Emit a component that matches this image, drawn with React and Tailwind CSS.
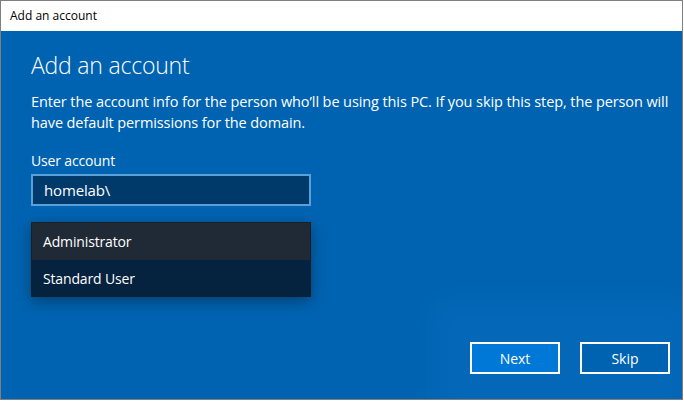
export default function App() {
  return (
    <div
      className="w-[684px] h-[402px] bg-white"
      style={{ fontFamily: '"Open Sans", "Noto Sans", sans-serif' }}
    >
      <div className="w-[683px] h-[400px] border border-[#7f7f7f] flex flex-col">
        <div className="h-[30px] bg-white flex items-center px-[9px] text-[12px] text-black shrink-0">
          Add an account
        </div>
        <div className="relative flex-1 bg-[#0063b1] text-white overflow-hidden">
          <div className="absolute left-[430px] top-[268px] w-[260px] h-[120px] bg-[#0a6bbd] opacity-50 blur-md" />
          <div className="relative flex flex-col pl-[30px] pr-[14px] pt-[18px]">
            <h1 className="text-[23px] font-light leading-[32px] tracking-[-0.2px]">Add an account</h1>
            <p className="mt-[10px] text-[14.5px] leading-[21px] tracking-[-0.1px] w-[650px]">
              Enter the account info for the person who’ll be using this PC. If you skip this step, the person will have default permissions for the domain.
            </p>
            <label className="mt-[18px] text-[14px] leading-[20px] tracking-[-0.15px]">User account</label>
            <div className="mt-[3px] w-[280px] h-[32px] border-2 border-[#5b9fd9] bg-[#003a6b] flex items-center px-[11px] text-[15px] tracking-[-0.15px]">
              homelab\
            </div>
            <div className="mt-[16px] w-[280px] border border-[#1b1f24] bg-[#1f2935] shadow-[0_4px_14px_rgba(0,0,0,0.35)] flex flex-col text-[14px] tracking-[-0.15px]">
              <div className="h-[37px] flex items-center px-[11px] bg-[#1f2a36]">Administrator</div>
              <div className="h-[36px] flex items-center px-[11px] bg-[#05223f]">Standard User</div>
            </div>
          </div>
          <div className="absolute right-[12px] bottom-[25px] flex gap-[20px] text-[14px]">
            <button className="w-[90px] h-[32px] border-2 border-white bg-[#0078d7] text-white">Next</button>
            <button className="w-[90px] h-[32px] border-2 border-white bg-[#0063b1] text-white">Skip</button>
          </div>
        </div>
      </div>
    </div>
  );
}
